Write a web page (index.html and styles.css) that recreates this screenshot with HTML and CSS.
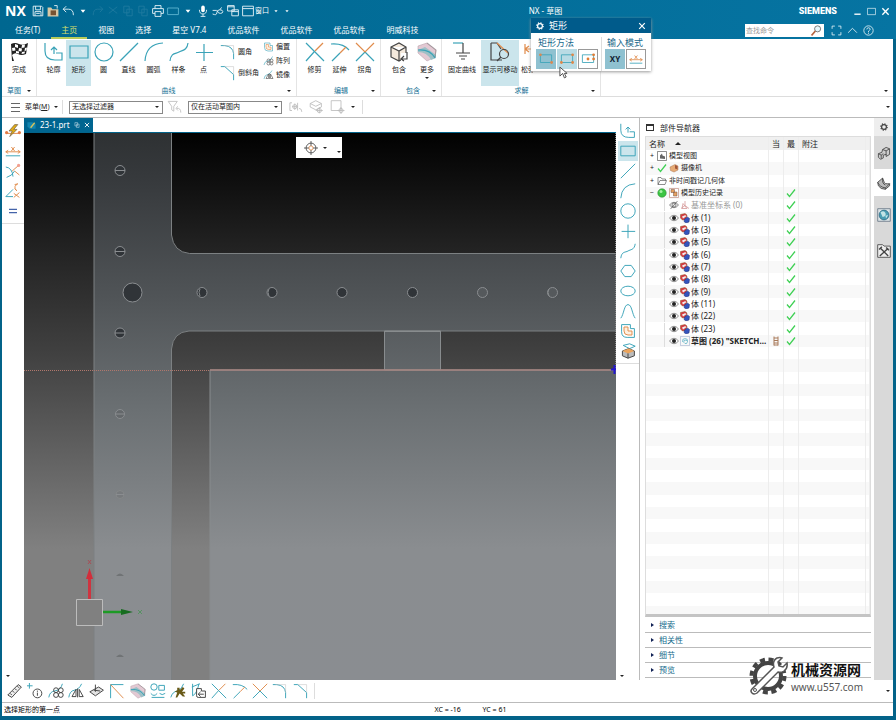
FILE: index.html
```html
<!DOCTYPE html>
<html lang="zh-CN">
<head>
<meta charset="utf-8">
<title>NX - 草图</title>
<link rel="stylesheet" href="styles.css">
</head>
<body>
<svg class="sprite" aria-hidden="true">
  <symbol id="profile" viewBox="0 0 20 20"><path class="t" d="M1 1v8q0 9 10 9h7v-7h-6M10 12V5M7 8l3-3 3 3"/></symbol>
  <symbol id="rect" viewBox="0 0 20 20"><path class="t" d="M1 4h18v12H1z"/></symbol>
  <symbol id="circle" viewBox="0 0 20 20"><circle class="t" cx="10" cy="10" r="9"/></symbol>
  <symbol id="line" viewBox="0 0 20 20"><path class="t" d="M1 19 19 1"/></symbol>
  <symbol id="arc" viewBox="0 0 20 20"><path class="t" d="M1 19Q2 2 19 1"/></symbol>
  <symbol id="spline" viewBox="0 0 20 20"><path class="t" d="M1 19C2 10 7 12 10 10S18 9 19 1"/></symbol>
  <symbol id="point" viewBox="0 0 20 20"><path class="t" d="M10 2v17M2 10.500h17"/></symbol>
  <symbol id="fillet" viewBox="0 0 20 20"><path class="t" d="M1 2h5q10 1 11 10v7"/><path class="g" d="M4 2h13v10" opacity=".5"/></symbol>
  <symbol id="chamfer" viewBox="0 0 20 20"><path class="t" d="M1 2h5l11 10v7"/><path class="g" d="M6 2h11v10" opacity=".5"/></symbol>
  <symbol id="hexagon" viewBox="0 0 20 20"><path class="t" d="M6 3h8l5 7-5 7H6l-5-7z"/></symbol>
  <symbol id="ellipse" viewBox="0 0 20 20"><ellipse class="t" cx="10" cy="10" rx="9" ry="6"/></symbol>
  <symbol id="conic" viewBox="0 0 20 20"><path class="t" d="M1 19C5 14 5 2 10 2s5 12 9 17"/></symbol>
  <symbol id="offset" viewBox="0 0 20 20"><path class="t" d="M2 2h11v5h5v11H9q-7 0-7-7z"/><path class="oc" d="M5 5h5v5h5v5h-5q-5 0-5-5z"/></symbol>
  <symbol id="pattern" viewBox="0 0 20 20"><path class="t" d="M1 18q1-7 7-8 8-1 10-9"/><circle class="k" cx="10" cy="9" r="3"/><circle class="k" cx="16" cy="9" r="3"/><circle class="k" cx="10" cy="15" r="3"/><circle class="k" cx="16" cy="15" r="3"/></symbol>
  <symbol id="mirror" viewBox="0 0 20 20"><path class="t" d="M1 18q1-8 7-9 6-1 9-8"/><path class="k" d="M12 7v11M10 8v9H5zM14 8v9h5z"/></symbol>
  <symbol id="trim" viewBox="0 0 20 20"><path class="t" d="M1 1 19 19M1 19l8-9"/><path class="o" d="m10 9 8-8"/></symbol>
  <symbol id="extend" viewBox="0 0 20 20"><path class="t" d="M1 2q12-1 18 6M2 19l8-8"/><path class="o" d="m10 11 6-6"/></symbol>
  <symbol id="corner" viewBox="0 0 20 20"><path class="t" d="M10 10 19 19M1 19l9-9"/><path class="o" d="m1 1 9 9 9-9"/></symbol>
  <symbol id="box" viewBox="0 0 20 20"><path class="k" fill="#f4e9dc" d="m2 5 8-4 7 4v10l-7 4-8-4zM2 5l8 4 7-4M10 9v10"/><path d="M12 11h7v8h-7z" fill="#fff"/><path class="k" d="M18 10v7h-6m3-3-3 3 3 2"/></symbol>
  <symbol id="wave" viewBox="0 0 20 20"><path fill="#e3c9d3" stroke="#bba3ad" stroke-width=".6" d="m1 4 9-3 9 7-1 7-8 4-9-8z"/><path fill="#9fc0c6" d="m1 8 7-3 11 8v3l-5 2Q10 10 1 10z"/><path class="t" d="M1 8q12-1 17 8"/><path class="k" d="m10 1 9 7-1 7" opacity=".3"/></symbol>
  <symbol id="fix" viewBox="0 0 20 20"><path class="t" d="M1 1h10"/><path class="k" d="M11 1v10M4 11h14M7 14h8M9 17h4"/></symbol>
  <symbol id="movable" viewBox="0 0 20 20"><path class="k" d="M1 1h6l4 6M1 1v17h11"/><path class="o" d="m7 1 11 10"/><circle class="k" cx="14" cy="12" r="4.500"/><path class="k" d="m11 15-4 4" stroke-width="2"/></symbol>
  <symbol id="relax" viewBox="0 0 20 20"><path class="o" d="M4 2v10M4 7h12M4 7l4-3M4 7l4 3"/></symbol>
  <symbol id="flag" viewBox="0 0 20 20"><path d="M2 2q4-2 8 0t9-1l-2 11q-5 2-8 0t-6 1L5 19H3z" fill="#222"/><path d="m6 2 3 1v3L6 5zM13 3l3-.500-.500 3-3 .500zM3 6l3-.500.500 3-3 .500zM10 6l3 .500-.500 3-3-.500zM16 6l2-.500-.500 3-2 .500zM7 9l3 .500v2L7 11zM13 10l3-.500-.500 2-3 .500z" fill="#fff"/></symbol>
  <symbol id="ruler" viewBox="0 0 20 20"><path class="k" fill="#eee" d="m1 15 13-13 4 3L6 18zM4 13l2 2M7 10l2 2M10 7l2 2M13 4l2 2"/></symbol>
  <symbol id="info" viewBox="0 0 20 20"><path class="t" d="M3 0v7M0 3.500h7"/><circle class="k" cx="13" cy="13" r="5.500"/><path class="k" d="M13 9.500v1.500m0 1v4"/></symbol>
  <symbol id="plane" viewBox="0 0 20 20"><path class="k" fill="#e4e4e4" d="m1 11 11-6 6 4-10 7zM8 2v9"/><path class="k" d="m6 9 8 1"/></symbol>
  <symbol id="wedge" viewBox="0 0 20 20"><path class="t" d="M2 19V2h16"/><path class="o" d="m2 2 16 17"/></symbol>
  <symbol id="relations" viewBox="0 0 20 20"><circle class="t" cx="5" cy="5" r="4"/><path class="t" d="M11 3h7v6h-7zM1 13q4 5 8 0M12 13q3 3 7 0M2 18h16"/></symbol>
  <symbol id="spark" viewBox="0 0 20 20"><path class="t" d="M1 18q2-7 8-8 6-2 8-9"/><path d="M9 6h3v3l4-4 2 2-3 4h4v2h-3l3 4h-3l-4-4-3 5H7l2-6-3-1 3-2z" fill="#695a18"/></symbol>
  <symbol id="convert" viewBox="0 0 20 20"><path class="t" d="M2 1v15q5-2 8-15M1 5l10-4"/><path class="k" fill="#fff" d="M7 7h6v3h5v8h-9q-2 0-2-2zM16 14H9m3-3-3 3 3 3"/></symbol>
  <symbol id="bolt" viewBox="0 0 20 20"><path class="o" d="M1 13h18"/><path d="m12 2-7 8h4l-3 7 9-9h-4l5-6z" fill="#e0ac18" stroke="#654" stroke-width=".8"/><circle cx="2" cy="12" r="2" fill="#e27b45"/><circle cx="18" cy="12" r="2" fill="#e27b45"/></symbol>
  <symbol id="dimension" viewBox="0 0 20 20"><path class="t" d="M1 16h18"/><path class="o" d="M1 11h18M4 9l-3 2 3 2M16 9l3 2-3 2M8 5l4 5M12 5l-4 5"/></symbol>
  <symbol id="tangent" viewBox="0 0 20 20"><path class="t" d="M1 5q8 1 9 12M2 18q7-2 10-8"/><path class="o" d="m9 10 8-7M12 10l6 5"/><circle cx="17" cy="3" r="2" fill="#f2a090"/></symbol>
  <symbol id="angle" viewBox="0 0 20 20"><path class="t" d="M1 17h9M1 17l9-9"/><path class="o" d="M16 1q-6 3-2 8M12 2l4-1M11 13l7 5M18 12l-7 6M12 7l3 3"/></symbol>
  <symbol id="equal" viewBox="0 0 20 20"><path d="M5 8h10M5 12h10" stroke="#4464aa" stroke-width="1.500"/></symbol>
  <symbol id="solid" viewBox="0 0 20 20"><path class="t" d="m4 3 8-2 7 3-7 3z"/><path class="k" fill="#bbb" d="m3 10 8-3 7 3v6l-8 3-7-3z"/><path fill="#eca45b" d="m3 10 8-3 7 3-8 3z"/><path class="k" d="M10 13v6"/></symbol>
  <symbol id="save" viewBox="0 0 20 20"><path class="w" d="M2 2h14l2 2v14H2zM6 2v6h8V2M5 18v-7h10v7M7 14h6"/></symbol>
  <symbol id="open" viewBox="0 0 20 20"><path fill="#d8c7a4" d="M1 4h6l2 3h10v12H1z"/><path fill="#775332" d="M6 9h9v8H6z"/><path class="w" d="M12 1h5v5"/></symbol>
  <symbol id="undo" viewBox="0 0 20 20"><path class="w" d="m7 2-5 5 5 5M2 7h9q8 0 8 10"/></symbol>
  <symbol id="redo" viewBox="0 0 20 20"><path class="w" d="m13 2 5 5-5 5m5-5H9q-7 0-7 10"/></symbol>
  <symbol id="cut" viewBox="0 0 20 20"><path class="w" d="m3 3 14 11M17 3 3 14"/></symbol>
  <symbol id="copy" viewBox="0 0 20 20"><path class="w" d="M3 2h9v11H3zM8 7h9v11H8z"/></symbol>
  <symbol id="print" viewBox="0 0 20 20"><path class="w" d="M5 6V1h10v5M5 14H1V6h18v8h-4M5 11h10v8H5z"/></symbol>
  <symbol id="screen" viewBox="0 0 20 20"><path d="M1 5h18v11H1z" fill="none" stroke="#5fb5d0" stroke-width="1.500"/></symbol>
  <symbol id="mic" viewBox="0 0 20 20"><rect x="7" y="1" width="6" height="11" rx="3" fill="#fff"/><path class="w" d="M4 8q0 7 6 7t6-7M10 15v4M6 19h8"/></symbol>
  <symbol id="touch" viewBox="0 0 20 20"><path class="w" d="M1 15q7 3 7-2 0-5 5-5 5 0 5 3t-4 3-5-4M1 9h7"/><path class="w" d="m13 8 3-4"/></symbol>
  <symbol id="windows" viewBox="0 0 20 20"><path class="w" d="M1 1h11v9H1zM1 3h11M8 8h11v10H8zM8 11h11"/></symbol>
  <symbol id="window" viewBox="0 0 20 20"><path class="w" d="M1 2h18v16H1zM1 6h18"/></symbol>
  <symbol id="caret" viewBox="0 0 20 20"><path d="M6 8h8l-4 5z" fill="currentColor"/></symbol>
  <symbol id="gear" viewBox="0 0 20 20"><circle cx="10" cy="10" r="6" fill="none" stroke="currentColor" stroke-width="3"/><circle cx="10" cy="10" r="8" fill="none" stroke="currentColor" stroke-width="3" stroke-dasharray="3 3.280"/></symbol>
  <symbol id="close" viewBox="0 0 20 20"><path d="m3 3 14 14M17 3 3 17" stroke="currentColor" stroke-width="3"/></symbol>
  <symbol id="funnel" viewBox="0 0 20 20"><path class="g" d="M1 2h13L9 9v7l-3-2V9zM13 12q6-1 6 6M15 9l-3 3 3 3"/></symbol>
  <symbol id="snap" viewBox="0 0 20 20"><path class="g" d="M2 4v11M2 4h3M2 15h3M13 4v11M5 9.500h8M9 5v9M15 12q4 0 4 5"/><circle class="g" cx="9" cy="9.500" r="3"/></symbol>
  <symbol id="snapbox" viewBox="0 0 20 20"><path class="g" d="m1 5 8-4 8 4v5l-8 4-8-4zM1 5l8 4 8-4M14 10v9M9 15h10"/><circle class="g" cx="14" cy="15" r="3"/></symbol>
  <symbol id="snapsq" viewBox="0 0 20 20"><path class="g" d="M1 1h14v14H1zM15 10v10M10 15h10"/><circle class="g" cx="15" cy="15" r="3"/></symbol>
  <symbol id="target" viewBox="0 0 20 20"><circle class="k" cx="10" cy="10" r="7"/><circle class="o" cx="10" cy="10" r="3"/><path class="k" d="M10 0v7M10 13v7M0 10h7M13 10h7"/></symbol>
  <symbol id="rectA" viewBox="0 0 20 20"><path class="t" d="M2 4h16v11H2z"/><g fill="#d98952"><circle cx="2" cy="4" r="2"/><circle cx="18" cy="15" r="2"/></g></symbol>
  <symbol id="rectB" viewBox="0 0 20 20"><path class="t" d="M2 4h16v11H2z"/><g fill="#df8748"><circle cx="2" cy="15" r="2"/><circle cx="18" cy="15" r="2"/><circle cx="18" cy="4" r="2"/></g></symbol>
  <symbol id="rectC" viewBox="0 0 20 20"><path class="t" d="M2 4h16v11H2z"/><g fill="#df7d35"><circle cx="10" cy="10" r="2"/><circle cx="18" cy="10" r="2"/><circle cx="18" cy="4" r="2"/></g></symbol>
  <symbol id="eye" viewBox="0 0 20 20"><path class="k" fill="#fff" d="M1 10q9-11 18 0-9 11-18 0"/><circle cx="10" cy="10" r="4" fill="#222"/></symbol>
  <symbol id="hidden" viewBox="0 0 20 20"><path class="k" fill="#eee" d="M1 10q9-11 18 0-9 11-18 0M3 18 17 2"/><circle class="k" cx="10" cy="10" r="4"/></symbol>
  <symbol id="body" viewBox="0 0 20 20"><path fill="#d63b42" stroke="#852" d="m1 3 9-2 4 3-2 9-7 1-4-4z"/><path fill="#eee" d="m4 7 7-3 1 3-6 4z"/><path fill="#3454bd" stroke="#237" d="m9 12 6-4 4 3-1 7-6 2-4-3z"/></symbol>
  <symbol id="csys" viewBox="0 0 20 20"><path d="M10 2v9L2 17m8-6 8 6M6 7l8 10H4z" fill="none" stroke="#d39393" stroke-width="1.500"/></symbol>
  <symbol id="sketch" viewBox="0 0 20 20"><path d="M1 1h18v18H1z" fill="none" stroke="#359" stroke-dasharray="2 2"/><path class="t" d="M5 12q-1-7 5-7t5 6-5 4-2-6q4-2 7 1"/></symbol>
  <symbol id="prt" viewBox="0 0 20 20"><path d="M1 3h11l7 4v10H6l-5-5z" fill="#1285b0"/><path d="m8 15 9-11" stroke="#d8c25a" stroke-width="3"/></symbol>
  <symbol id="view" viewBox="0 0 20 20"><path class="k" fill="#fff" d="M1 1h18v18H1z"/><path fill="#666" d="M6 15V9l4-4 1 4 5 2v5z"/></symbol>
  <symbol id="camera" viewBox="0 0 20 20"><path fill="#e7ab75" stroke="#a75" d="m2 8 10-5 6 3v8l-8 4-7-3z"/><path fill="#a25639" d="m12 4 5 2v7l-5-2z"/></symbol>
  <symbol id="folder" viewBox="0 0 20 20"><path class="k" d="M2 17V3h6l2 3h7v3M2 17l4-8h13l-3 8z"/></symbol>
  <symbol id="history" viewBox="0 0 20 20"><path fill="#fff" stroke="#a65" d="M1 1h18v18H1z"/><path fill="#e5a060" stroke="#754" d="M4 3h7v6H4zM9 8h7v8H9z"/></symbol>
  <symbol id="green" viewBox="0 0 20 20"><circle cx="10" cy="10" r="8.500" fill="#3cc443" stroke="#27832d"/><circle cx="8" cy="7" r="3" fill="#a5f0a3"/></symbol>
  <symbol id="check" viewBox="0 0 20 20"><path d="m2 11 5 6L18 3" fill="none" stroke="#3fd054" stroke-width="2.500"/></symbol>
  <symbol id="ladder" viewBox="0 0 20 20"><path d="M6 1v18M14 1v18M6 4h8M6 9h8M6 14h8M6 18h8" stroke="#a97a5a" stroke-width="2"/></symbol>
  <symbol id="assembly" viewBox="0 0 20 20"><path class="k" fill="#ccc" d="m8 5 5-3 5 2v8l-5 3v-3l-4 1v4l-4 2-3-3v-5l5-2z"/><path class="k" d="m2 11 4 2v5m0-5 3-2M8 5l5 2 5-3M13 7v6"/></symbol>
  <symbol id="part" viewBox="0 0 20 20"><path class="k" fill="#bbb" d="m1 9 7-6 2 5q0 4 8 3v3l-6 5q-7 0-10-5z"/><path class="k" d="M1 9q3 7 11 8l6-6M12 17v2M8 3q-1 8 4 10"/></symbol>
  <symbol id="globe" viewBox="0 0 20 20"><path d="M1 1h18v18H1z" fill="#dde4e7" stroke="#567"/><circle cx="10" cy="10" r="7" fill="#4a9db3" stroke="#27627c"/><path d="M5 6q5-3 7 1t-4 6zM12 11l4-1-3 5z" fill="#c3e4e6"/></symbol>
  <symbol id="tools" viewBox="0 0 20 20"><path class="k" fill="#eee" d="M1 1h7l2 2h9v16H1z"/><path d="m4 17 12-11M5 6l11 11M3 8l4-4M13 5l4 4" stroke="#444" stroke-width="2"/></symbol>
  <symbol id="search" viewBox="0 0 20 20"><circle cx="12" cy="7" r="5.500" fill="#e7f6fb" stroke="#666" stroke-width="1.500"/><path d="m8 11-7 8" stroke="#b56540" stroke-width="3"/></symbol>
  <symbol id="full" viewBox="0 0 20 20"><path class="w" d="M2 7V2h5M13 2h5v5M18 13v5h-5M7 18H2v-5"/></symbol>
  <symbol id="up" viewBox="0 0 20 20"><path class="w" d="m2 14 8-8 8 8"/></symbol>
  <symbol id="help" viewBox="0 0 20 20"><circle class="w" cx="10" cy="10" r="8.500"/><path class="w" d="M7 8q0-3 3-3t3 3q0 1-3 3v2m0 1v2"/></symbol>
  <symbol id="min" viewBox="0 0 20 20"><path d="M3 16h14" stroke="#fff" stroke-width="3"/></symbol>
  <symbol id="max" viewBox="0 0 20 20"><path class="w" d="M1 3h18v14H1z"/></symbol>
</svg>

<div class="app">
  <header class="banner">
    <div class="titlebar">
      <div class="quick">
        <strong class="logo">NX</strong>
        <svg><use href="#save"/></svg><svg><use href="#open"/></svg><svg><use href="#undo"/></svg><svg><use href="#caret"/></svg>
        <svg class="dim"><use href="#redo"/></svg><svg class="dim"><use href="#cut"/></svg><svg class="dim"><use href="#copy"/></svg><svg class="dim"><use href="#copy"/></svg>
        <svg><use href="#print"/></svg><svg><use href="#screen"/></svg><svg><use href="#caret"/></svg><svg><use href="#mic"/></svg><svg><use href="#touch"/></svg><svg><use href="#windows"/></svg><svg><use href="#window"/></svg>
        <span class="winlabel">窗口</span><svg class="tiny"><use href="#caret"/></svg><svg class="tiny"><use href="#caret"/></svg>
      </div>
      <h1>NX - 草图</h1>
      <div class="wincontrols"><strong>SIEMENS</strong>
        <button aria-label="最小化"><svg><use href="#min"/></svg></button><button aria-label="最大化"><svg><use href="#max"/></svg></button><button aria-label="关闭"><svg><use href="#close"/></svg></button>
      </div>
    </div>
    <div class="tabrow">
      <nav class="tabs"><a href="#">任务(T)</a><a href="#" class="active">主页</a><a href="#">视图</a><a href="#">选择</a><a href="#">星空 V7.4</a><a href="#">优品软件</a><a href="#">优品软件</a><a href="#">优品软件</a><a href="#">明威科技</a></nav>
      <div class="find"><div class="searchbox"><input type="text" aria-label="查找命令" placeholder="查找命令"><svg><use href="#search"/></svg></div><svg><use href="#full"/></svg><svg><use href="#up"/></svg><svg><use href="#help"/></svg></div>
    </div>
  </header>

  <div class="ribbon">
    <section class="group finish"><div class="items"><button class="tool"><svg><use href="#flag"/></svg>完成</button></div><footer>草图<i></i></footer></section>
    <section class="group curves"><div class="items">
      <button class="tool"><svg><use href="#profile"/></svg>轮廓</button><button class="tool on"><svg><use href="#rect"/></svg>矩形</button><button class="tool"><svg><use href="#circle"/></svg>圆</button><button class="tool"><svg><use href="#line"/></svg>直线</button><button class="tool"><svg><use href="#arc"/></svg>圆弧</button><button class="tool"><svg><use href="#spline"/></svg>样条</button><button class="tool"><svg><use href="#point"/></svg>点</button>
      <div class="stack two"><button><svg><use href="#fillet"/></svg>圆角</button><button><svg><use href="#chamfer"/></svg>倒斜角</button></div>
      <div class="stack three"><button><svg><use href="#offset"/></svg>偏置</button><button><svg><use href="#pattern"/></svg>阵列</button><button><svg><use href="#mirror"/></svg>镜像</button></div>
    </div><footer>曲线<i></i></footer></section>
    <section class="group edit"><div class="items"><button class="tool"><svg><use href="#trim"/></svg>修剪</button><button class="tool"><svg><use href="#extend"/></svg>延伸</button><button class="tool"><svg><use href="#corner"/></svg>拐角</button></div><footer>编辑<i></i></footer></section>
    <section class="group include"><div class="items"><button class="tool"><svg><use href="#box"/></svg>包含</button><button class="tool"><svg><use href="#wave"/></svg>更多<i></i></button></div><footer>包含<i></i></footer></section>
    <section class="group solve"><div class="items"><button class="tool wide"><svg><use href="#fix"/></svg>固定曲线</button><button class="tool wide on"><svg><use href="#movable"/></svg>显示可移动</button><button class="tool clip"><svg><use href="#relax"/></svg>松弛</button></div><footer>求解<i></i></footer></section>
    <section class="group rest"><footer><i></i></footer></section>
  </div>

  <div class="optionbar">
    <button class="menu"><span class="burger"></span>菜单(<u>M</u>)<i></i></button>
    <div class="pick"><select aria-label="选择过滤器"><option>无选择过滤器</option></select><i></i></div>
    <svg class="funnel"><use href="#funnel"/></svg>
    <div class="pick"><select aria-label="选择范围"><option>仅在活动草图内</option></select><i></i></div>
    <div class="snaps"><svg><use href="#snap"/></svg><svg><use href="#snapbox"/></svg><svg><use href="#snapsq"/></svg><i></i></div>
    <i class="more"></i>
  </div>

  <main class="work">
    <aside class="strip left"><svg><use href="#bolt"/></svg><svg><use href="#dimension"/></svg><svg><use href="#tangent"/></svg><svg><use href="#angle"/></svg><svg><use href="#equal"/></svg><hr><i></i></aside>
    <section class="document">
      <div class="doctabs"><a href="#" class="doctab"><svg><use href="#prt"/></svg>23-1.prt<svg class="small"><use href="#copy"/></svg><svg class="small"><use href="#close"/></svg></a></div>
      <div class="viewport">
        <svg class="model" viewBox="24 133 592 547" preserveAspectRatio="xMinYMin slice" role="img" aria-label="草图视图">
          <defs>
            <linearGradient id="bg" gradientUnits="userSpaceOnUse" x1="0" y1="133" x2="0" y2="680"><stop offset="0" stop-color="#010101"/><stop offset=".4" stop-color="#404040"/><stop offset=".76" stop-color="#808080"/><stop offset="1" stop-color="#808080"/></linearGradient>
            <linearGradient id="plate" gradientUnits="userSpaceOnUse" x1="0" y1="133" x2="0" y2="680"><stop offset="0" stop-color="#2e3133"/><stop offset=".08" stop-color="#36393c"/><stop offset=".3" stop-color="#505457"/><stop offset=".5" stop-color="#6a6f72"/><stop offset=".76" stop-color="#8a8d90"/><stop offset="1" stop-color="#8a8d91"/></linearGradient>
          </defs>
          <rect x="24" y="133" width="592" height="547" fill="url(#bg)"/>
          <path fill="url(#plate)" stroke="#7c8082" d="M94 132h77.500v103q2 17 18 18.500H617V331H189q-16 1-17.500 18V681H94z"/>
          <path fill="url(#plate)" stroke="#888c8e" d="M384.500 331h56v39h-56zM210 370h407v311H210z"/>
          <path d="M384.500 370V331.500h56V370" fill="none" stroke="#888c8e"/>
          <g fill="#303438" stroke="#8a8d90"><circle cx="120" cy="170.500" r="5"/><circle cx="120" cy="251.500" r="5"/><circle cx="120" cy="333" r="5"/><circle cx="120" cy="414" r="4.500" fill="#64686b"/><circle cx="120" cy="494.500" r="4" fill="#777a7d" stroke="#858889"/>
          <path d="M115 170.500h10M115 251.500h10M115 333h10M116 414h8M116 494.500h8"/>
          <circle cx="132.500" cy="292.500" r="9.500"/><circle cx="202" cy="292.500" r="5"/><circle cx="272" cy="292.500" r="5"/><circle cx="342" cy="292.500" r="5"/><circle cx="412.500" cy="292.500" r="5"/><circle cx="482.500" cy="292.500" r="5" fill="#55595c"/><circle cx="552.500" cy="292.500" r="5" fill="#55595c"/></g>
          <path d="M200 289q-2 3 0 7M269 289q-2 3 0 7M549 289q-2 3 0 7" stroke="#85898b" fill="none"/>
          <path d="M116 576q4-5 8 0zM116 657q4-5 8 0z" fill="#707375"/>
          <path d="M24 370.500h186" stroke="#b0776c" stroke-dasharray="1 1"/><path d="M210 370h406" stroke="#a6837f" stroke-width="1.500"/>
          <path d="M615.500 133v237" stroke="#888" stroke-dasharray="1 1"/><path d="M611 369.500h5M614.500 365v9" stroke="#2215d0" stroke-width="2"/>
          <path d="M76.500 599.500h26v26h-26z" fill="#808080" stroke="#bcbcbc"/>
          <path d="M89.500 599v-20" stroke="#cf3440" stroke-width="3"/><path d="m86 579 3.500-11 3.500 11z" fill="#d22e3b"/><path d="m88 560 3 4m0-4-3 4" stroke="#c23" opacity=".5"/><path d="m138 610 4 4m0-4-4 4" stroke="#293" opacity=".5"/>
          <path d="M103 612h20" stroke="#1d9a25" stroke-width="2.500"/><path d="m121 609 12 3-12 3z" fill="#176c20"/>
        </svg>
        <div class="floatbar"><svg><use href="#target"/></svg><i></i><i class="low"></i></div>
      </div>
    </section>
    <aside class="strip right"><svg><use href="#profile"/></svg><svg class="on"><use href="#rect"/></svg><svg><use href="#line"/></svg><svg><use href="#arc"/></svg><svg><use href="#circle"/></svg><svg><use href="#point"/></svg><svg><use href="#spline"/></svg><svg><use href="#hexagon"/></svg><svg><use href="#ellipse"/></svg><svg><use href="#conic"/></svg><svg><use href="#offset"/></svg><svg><use href="#solid"/></svg><hr><i></i></aside>
    <section class="navigator">
      <h2><span class="square"></span>部件导航器</h2>
      <div class="tree"><table>
        <colgroup><col><col class="narrow"><col class="narrow"><col class="notes"><col class="scroll"></colgroup>
        <thead><tr><th>名称<b></b></th><th>当</th><th>最</th><th>附注</th><th></th></tr></thead>
        <tbody id="rows"></tbody>
      </table></div>
      <div class="sections"><details><summary>搜索</summary></details><details><summary>相关性</summary></details><details><summary>细节</summary></details><details><summary>预览</summary></details></div>
    </section>
    <nav class="resource"><button aria-label="设置"><svg class="cog"><use href="#gear"/></svg></button><button aria-label="装配导航器"><svg><use href="#assembly"/></svg></button><button class="current" aria-label="部件导航器"><svg><use href="#part"/></svg></button><button aria-label="浏览器"><svg><use href="#globe"/></svg></button><button aria-label="工具"><svg><use href="#tools"/></svg></button></nav>
  </main>

  <div class="bottombar"><div class="bottomtools"><svg><use href="#ruler"/></svg><svg><use href="#info"/></svg><svg><use href="#pattern"/></svg><svg><use href="#mirror"/></svg><svg><use href="#plane"/></svg><svg><use href="#wedge"/></svg><svg><use href="#wave"/></svg><svg><use href="#relations"/></svg><svg><use href="#spark"/></svg><svg><use href="#convert"/></svg><svg><use href="#trim"/></svg><svg><use href="#extend"/></svg><svg><use href="#corner"/></svg><svg><use href="#fillet"/></svg><svg><use href="#chamfer"/></svg></div><i></i></div>
  <footer class="status"><span>选择矩形的第一点</span><span>XC = -16</span><span>YC = 61</span></footer>

  <section class="dialog" role="dialog" aria-label="矩形">
    <header><svg><use href="#gear"/></svg><span>矩形</span><button aria-label="关闭"><svg><use href="#close"/></svg></button></header>
    <div class="choices">
      <div class="choice"><span>矩形方法</span><div><button class="on" aria-label="按两点"><svg><use href="#rectA"/></svg></button><button class="hover" aria-label="按三点"><svg><use href="#rectB"/></svg></button><button aria-label="从中心"><svg><use href="#rectC"/></svg></button></div></div>
      <div class="choice"><span>输入模式</span><div><button class="on">XY</button><button aria-label="参数模式"><svg><use href="#dimension"/></svg></button></div></div>
    </div>
    <svg class="pointer" viewBox="0 0 10 14"><path d="M1 1v10l3-3 2 5 2-1-2-4h3z" fill="#fff" stroke="#444"/></svg>
  </section>

  <div class="watermark">
    <svg viewBox="0 0 40 40"><circle cx="19" cy="20" r="13" fill="none" stroke="#444" stroke-width="4"/><circle cx="19" cy="20" r="16.500" fill="none" stroke="#444" stroke-width="4" stroke-dasharray="5 3.640"/><path d="M3 33 25 11q-2-6 3-9 3-1 5 0l-4 4 1 4 4 1 4-4q1 5-3 8-3 2-6 1L8 37q-3 2-5 0t0-4z" fill="#fff" stroke="#555" stroke-width="1.500"/><circle cx="6" cy="34" r="1.500" fill="#fff" stroke="#555"/></svg>
    <div><strong>机械资源网</strong><span>www.u557.com</span></div>
  </div>
</div>
<script src="app.js"></script>
</body>
</html>
```
FILE: styles.css
```css
* { box-sizing: border-box; }
body { margin: 0; font: 7px/10px "Noto Sans", "Noto Sans CJK SC", sans-serif; color: #222; background: #036389; }
button, input, select { font: inherit; color: inherit; margin: 0; padding: 0; border: 0; background: none; border-radius: 0; }
a { color: inherit; text-decoration: none; }
h1, h2 { margin: 0; font-weight: 400; }
svg { display: block; flex: none; overflow: visible; }
i { display: block; flex: none; border: 2px solid transparent; border-top-color: #222; border-bottom: 0; }
.sprite { position: absolute; width: 0; height: 0; }
.t, .o, .k, .g, .w { stroke-width: 1.2; }
.t, .o, .g, .w { fill: none; }
.k:not([fill]) { fill: none; }
.t { stroke: #3aa3b8; }
.o { stroke: #e08c4c; }
.oc { stroke: #e08c4c; stroke-width: 1.2; fill: #fff0df; }
.k { stroke: #444; }
.g { stroke: #bbb; }
.w { stroke: #e8f4f8; stroke-width: 1.5; }

.app { position: relative; display: flex; flex-direction: column; min-height: 100vh; padding: 0 3px 4px 2px; }

.banner { margin: 0 -3px 0 -2px; color: #fff; background: linear-gradient(90deg, #006790, #0674a2); }
.titlebar { display: grid; grid-template-columns: 59% 1fr auto; align-items: center; height: 22px; }
.quick { display: flex; align-items: center; gap: 3px; padding-left: 5px; }
.quick svg { width: 12px; height: 12px; }
.quick .tiny { width: 8px; height: 8px; }
.quick .dim { opacity: .12; }
.logo { width: 24px; font: 700 14px/20px "Open Sans", sans-serif; }
.winlabel { margin-left: -2px; }
h1 { font-size: 8px; line-height: 12px; }
.wincontrols { display: flex; align-items: center; gap: 5px; padding-right: 6px; }
.wincontrols strong { margin-right: 11px; font: 900 9px/12px "Roboto", sans-serif; }
.wincontrols svg { width: 9px; height: 9px; }
.tabrow { display: flex; justify-content: space-between; height: 17px; padding: 0 22px 0 5px; }
.tabs { display: flex; gap: 1px; font-size: 8px; line-height: 15px; }
.tabs a { padding: 0 10px; border-bottom: 2px solid transparent; white-space: nowrap; }
.tabs .active { color: #d9e06c; border-bottom-color: #b8cc5a; }
.find { display: flex; align-items: center; gap: 5px; }
.find > svg { width: 11px; height: 11px; }
.searchbox { display: flex; align-items: center; width: 79px; height: 13px; margin-right: 2px; background: #fff; }
.searchbox input { width: 66px; height: 13px; padding-left: 1px; color: #222; }
.searchbox input::placeholder { color: #999; }
.searchbox svg { width: 11px; height: 11px; }

.ribbon { display: flex; height: 58px; background: #fff; border-bottom: 1px solid #ddd; }
.group { display: flex; flex-direction: column; border-right: 1px solid #e4e4e4; }
.items { display: flex; flex: 1; padding-top: 1px; }
.group footer { position: relative; height: 10px; text-align: center; color: #167195; }
.group footer i { position: absolute; right: 5px; top: 4px; }
.tool { display: flex; flex-direction: column; align-items: center; width: 25px; height: 46px; padding-top: 2px; white-space: nowrap; }
.tool svg { width: 20px; height: 20px; margin-bottom: 3px; }
.tool i { margin-top: 2px; }
.tool.wide { width: 38px; }
.clip { width: 14px; overflow: hidden; align-items: flex-start; padding-left: 2px; }
.on { background: #cbe5ec; }
.finish { width: 35px; }
.finish footer { padding-right: 10px; }
.finish .tool { width: 34px; }
.curves { width: 260px; padding-left: 4px; }
.edit { width: 84px; padding-left: 5px; }
.include { width: 61px; padding-left: 4px; }
.include .tool { width: 28px; }
.solve { width: 159px; padding-left: 1px; }
.rest { flex: 1; justify-content: flex-end; border: 0; }
.stack { display: flex; flex-direction: column; }
.stack button { display: flex; align-items: center; gap: 2px; white-space: nowrap; }
.two { width: 46px; gap: 1px; padding: 2px 0 0 4px; }
.two svg { width: 16px; height: 20px; }
.three { gap: 4px; padding: 2px 0 0 1px; }
.three svg { width: 11px; height: 10px; }

.optionbar { display: flex; align-items: center; height: 21px; padding: 0 3px 0 9px; background: #fff; border-bottom: 1px solid #bbb; }
.menu { display: flex; align-items: center; width: 52px; height: 14px; border-right: 1px solid #ddd; }
.menu i { margin-left: 4px; }
.burger { width: 9px; height: 9px; margin-right: 5px; border: solid #666; border-width: 1px 0; background: linear-gradient(#666, #666) center / 100% 1px no-repeat; }
.pick { position: relative; margin-left: 6px; }
.pick select { display: block; width: 94px; height: 13px; padding-left: 2px; border: 1px solid #888; appearance: none; background: #fff; }
.pick i { position: absolute; right: 4px; top: 5px; }
.funnel { width: 15px; height: 14px; margin-left: 4px; }
.snaps { display: flex; align-items: center; gap: 6px; margin-left: 6px; padding-right: 7px; border-right: 1px solid #ddd; }
.snaps svg { width: 15px; height: 14px; }
.optionbar .more { margin-left: auto; }

.work { display: flex; flex: 1; background: #fff; }
.strip { display: flex; flex-direction: column; align-items: center; gap: 4px; padding-top: 5px; }
.strip svg { width: 16px; height: 16px; }
.strip hr { width: 100%; margin: 0; border: 0; border-top: 1px solid #ddd; }
.strip i { margin: auto auto 3px 4px; }
.left { width: 22px; }
.right { width: 23px; }
.strip .on { outline: 2px solid #cbe5ec; }
.document { display: flex; flex: 1; flex-direction: column; min-width: 0; }
.doctabs { display: flex; height: 15px; border-bottom: 1px solid #036389; }
.doctab { display: flex; align-items: center; gap: 4px; padding: 0 3px; color: #fff; background: #006590; font-size: 8px; }
.doctab svg { width: 9px; height: 9px; }
.doctab .small { width: 6px; height: 6px; }
.viewport { position: relative; flex: 1; overflow: hidden; }
.model { position: absolute; inset: 0; width: 100%; height: 100%; }
.floatbar { position: absolute; left: 46%; top: 4px; display: flex; align-items: center; gap: 5px; width: 46px; height: 21px; padding-left: 8px; background: #fff; }
.floatbar svg { width: 14px; height: 14px; }
.floatbar .low { margin: 8px 0 0 5px; }

.navigator { display: flex; flex-direction: column; width: 235px; padding: 1px 3px 2px 5px; border-left: 1px solid #bbb; }
h2 { display: flex; align-items: center; gap: 6px; height: 17px; padding-left: 1px; font-size: 8px; }
.square { width: 8px; height: 7px; border: 1px solid #333; border-top-width: 2px; }
.tree { position: relative; flex: 1; overflow: hidden; border: 1px solid #ddd; border-bottom: 3px solid #c4c4c4; }
.tree table { position: absolute; width: 100%; height: calc(100% + 4px); border-collapse: collapse; table-layout: fixed; font-size: 8px; line-height: 10px; }
.narrow { width: 15px; }
.notes { width: 67px; }
.scroll { width: 4px; }
th, td { padding: 0; border-right: 1px solid #ededed; white-space: nowrap; }
td { height: 12px; }
th { height: 13px; padding-left: 3px; font-weight: 400; text-align: left; background: #f0f0f0; }
th b { display: inline-block; margin: 0 0 2px 10px; border: 3px solid transparent; border-bottom-color: #222; border-top: 0; }
tbody tr:nth-child(even) { background: #f8f8f8; }
td svg { width: 10px; height: 10px; }
td > svg { margin: 0 auto; }
.node { display: flex; align-items: center; gap: 1px; padding-left: 4px; }
.node.root { gap: 2px; font-size: 7px; }
.node .sign { width: 5px; font-size: 7px; line-height: 10px; }
.node.child { height: 12px; margin-left: 18px; padding-left: 4px; border-left: 1px solid #ddd; }
.node.muted { color: #999; }
.node.bold { font-weight: 700; }
.sections { padding-top: 1px; font-size: 8px; color: #146b8c; }
.sections summary { display: flex; align-items: center; gap: 5px; height: 15px; padding-left: 6px; border-bottom: 1px solid #bbb; list-style: none; }
.sections summary::before { content: ""; border: 2px solid transparent; border-left: 3px solid #125; border-right: 0; }
.resource { width: 19px; background: #d9d9d9; }
.resource button { display: grid; place-items: center; width: 100%; height: 33px; }
.resource svg { width: 14px; height: 14px; }
.resource .cog { width: 8px; height: 8px; color: #444; }
.resource button:first-child { height: 18px; background: #eee; }
.resource .current { height: 27px; background: #fff; }
.resource .current + button { height: 38px; }

.bottombar { display: flex; align-items: center; justify-content: space-between; height: 23px; padding: 0 3px; background: #fff; border-bottom: 1px solid #bbb; }
.bottomtools { display: flex; justify-content: space-between; width: 310px; padding-right: 3px; border-right: 1px solid #ddd; }
.bottomtools svg { width: 16px; height: 16px; margin: 0 2px; }
.status { display: grid; grid-template-columns: 430fr 48fr 410fr; align-items: center; height: 13px; padding-left: 2px; color: #000; background: #fff; }

.dialog { position: absolute; left: 531px; top: 18px; width: 120px; background: #fff; box-shadow: 0 1px 3px #999; color: #17678b; font-size: 9px; line-height: 12px; }
.dialog header { display: flex; align-items: center; gap: 5px; height: 15px; padding: 0 5px; color: #fff; background: #005b8b; }
.dialog header svg { width: 8px; height: 8px; }
.dialog header button { margin-left: auto; }
.choices { display: flex; height: 38px; padding: 4px 5px 0; }
.choice + .choice { margin-left: 3px; padding-left: 3px; border-left: 1px solid #ddd; }
.choice > span { display: block; padding-left: 2px; }
.choice > div { display: flex; gap: 1px; }
.choice button { display: grid; place-items: center; width: 20px; height: 20px; border: 1px solid #999; color: #123; font-size: 8px; font-weight: 700; }
.choice button svg { width: 14px; height: 14px; }
.choice .on { background: #8fc1d0; border-color: #8fc1d0; }
.choice .hover { background: #b9dbe4; border-color: #b9dbe4; }
.pointer { position: absolute; left: 28px; top: 48px; width: 9px; height: 13px; }

.watermark { position: absolute; right: 33px; bottom: 24px; display: flex; gap: 2px; color: #111; }
.watermark svg { width: 40px; height: 40px; }
.watermark div { display: flex; flex-direction: column; padding-top: 4px; }
.watermark strong { font-size: 14px; line-height: 20px; }
.watermark span { color: #555; font-size: 10px; line-height: 14px; }
```
FILE: app.js
```js
const icon = name => `<svg><use href="#${name}"/></svg>`;
const rows = [
  { kind: "root", sign: "+", icons: ["view"], text: "模型视图" },
  { kind: "root", sign: "+", icons: ["check", "camera"], text: "摄像机" },
  { kind: "root", sign: "+", icons: ["folder"], text: "非时间戳记几何体" },
  { kind: "root", sign: "−", icons: ["green", "history"], text: "模型历史记录", ok: true },
  { kind: "child muted", icons: ["hidden", "csys"], text: "基准坐标系 (0)", ok: true },
  ...[1, 3, 5, 6, 7, 8, 9, 11, 22, 23].map(n => ({ kind: "child", icons: ["eye", "body"], text: `体 (${n})`, ok: true })),
  { kind: "child bold", icons: ["eye", "sketch"], text: "草图 (26) \"SKETCH...", ok: true, current: true }
];
while (rows.length < 38) rows.push(null);
document.getElementById("rows").innerHTML = rows.map(r => r
  ? `<tr><td><div class="node ${r.kind}">${r.sign ? `<span class="sign">${r.sign}</span>` : ""}${r.icons.map(icon).join("")}<span>${r.text}</span></div></td><td>${r.current ? icon("ladder") : ""}</td><td>${r.ok ? icon("check") : ""}</td><td></td><td></td></tr>`
  : "<tr><td></td><td></td><td></td><td></td><td></td></tr>").join("");
```
